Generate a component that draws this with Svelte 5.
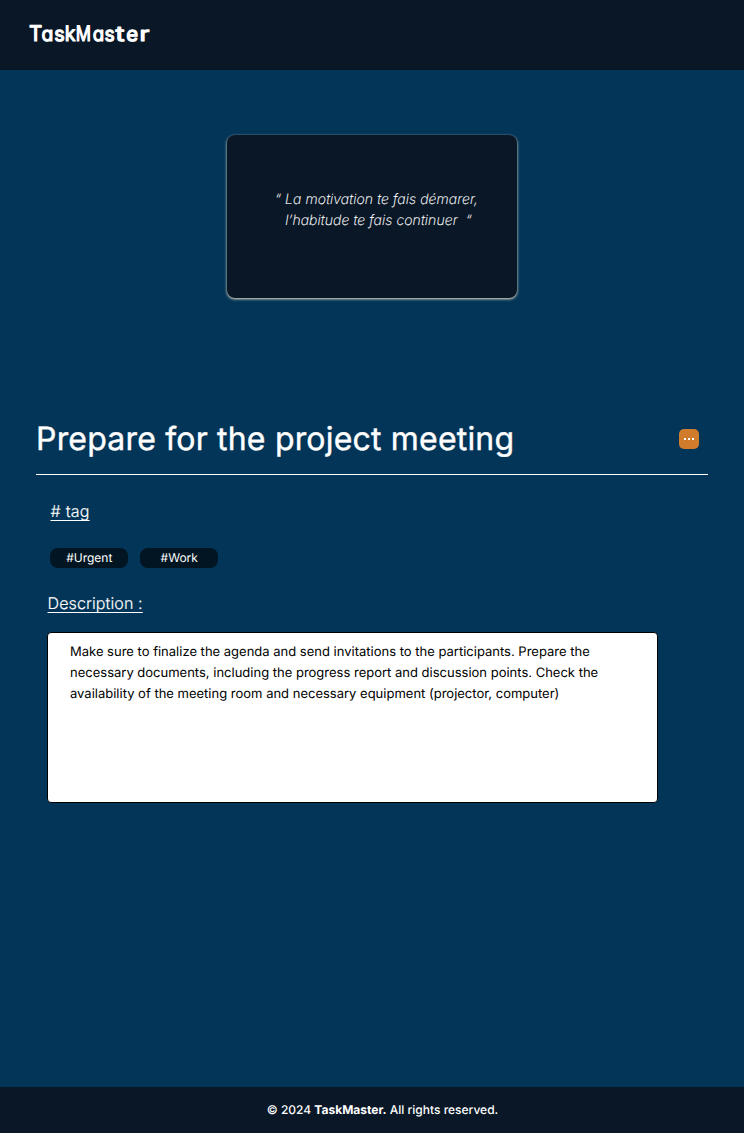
<script>
  const tags = ['#Urgent', '#Work'];

  // letter, left edge, advance width, font size
  const logo = [
    ['T', 0, 13.2, 21.5],
    ['a', 12.6, 11.8, 20],
    ['s', 25.2, 10.4, 20],
    ['k', 35.8, 10.8, 21],
    ['M', 46.7, 15.2, 21],
    ['a', 63.7, 11.4, 20],
    ['s', 75.5, 10.2, 20],
    ['t', 86.6, 9, 20.5],
    ['e', 97.2, 11.8, 20],
    ['r', 110.4, 9.8, 20],
  ];
</script>

<div class="page">
  <header>
    <svg class="logo" width="140" height="34" viewBox="0 0 140 34" aria-label="TaskMaster">
      {#each logo as [letter, x, width, size]}<text {x} y="23.2" font-size={size} textLength={width} lengthAdjust="spacingAndGlyphs">{letter}</text>{/each}
    </svg>
  </header>

  <main>
    <blockquote>
      <p>“ La motivation te fais démarer,</p>
      <p class="second">l’habitude te fais continuer&nbsp; “</p>
    </blockquote>

    <section>
      <div class="heading">
        <h1>Prepare for the project meeting</h1>
        <button aria-label="More">
          <svg width="20" height="20" viewBox="0 0 20 20">
            <path d="M5 9h2v2H5zM9 9h2v2H9zM13 9h2v2h-2z" fill="#fff" />
          </svg>
        </button>
      </div>
      <h2 class="tag-label"># tag</h2>
      <div class="tags">
        {#each tags as tag}
          <span class="tag">{tag}</span>
        {/each}
      </div>
      <h2 class="desc-label">Description :</h2>
      <div class="description">
        Make sure to finalize the agenda and send invitations to the participants. Prepare the<br />
        necessary documents, including the progress report and discussion points. Check the<br />
        availability of the meeting room and necessary equipment (projector, computer)
      </div>
    </section>
  </main>

  <footer>
    <p>© 2024 <b>TaskMaster.</b> All rights reserved.</p>
  </footer>
</div>

<style>
  :global(body) {
    margin: 0;
    background: #033558;
  }
  .page {
    display: flex;
    flex-direction: column;
    height: 1133px;
    box-sizing: border-box;
    background: #033558;
    color: #fff;
    font-family: Inter, sans-serif;
    text-rendering: geometricPrecision;
  }
  h1, h2, p, blockquote {
    margin: 0;
    font-weight: 400;
  }
  header {
    height: 70px;
    box-sizing: border-box;
    padding: 18px 0 0 29px;
    background: #0a1727;
  }
  .logo text {
    font-weight: 400;
    font-feature-settings: 'cv11';
    fill: #fff;
    stroke: #fff;
    stroke-width: 1.2px;
    stroke-linejoin: round;
  }
  main {
    flex: 1;
    padding: 65px 36px 0;
  }
  blockquote {
    width: 290px;
    height: 163px;
    box-sizing: border-box;
    margin: 0 auto;
    padding-top: 54px;
    border-radius: 8px;
    background: #0a1727;
    box-shadow: 0 1px 3px rgba(255, 241, 213, 0.95);
    font-size: 14px;
    line-height: 21px;
    text-align: center;
    padding-left: 9px;
  }
  blockquote p {
    font-style: italic;
    font-weight: 250;
    letter-spacing: 0.12px;
    -webkit-text-stroke: 0.15px #fff;
  }
  .second {
    padding-left: 4px;
  }
  .heading {
    display: flex;
    align-items: center;
    justify-content: space-between;
    height: 70px;
    padding-top: 2px;
    margin-top: 104px;
    padding-right: 9px;
    border-bottom: 1px solid #fff;
  }
  h1 {
    font-size: 32px;
    font-weight: 400;
    line-height: 48px;
    letter-spacing: 0.19px;
    -webkit-text-stroke: 0.4px #fff;
  }
  button {
    width: 20px;
    height: 20px;
    padding: 0;
    border: 0;
    border-radius: 5px;
    background: #d17c2d;
  }
  svg {
    display: block;
  }
  h2 {
    font-size: 16px;
    font-weight: 350;
    line-height: 24px;
    letter-spacing: 0.12px;
    -webkit-text-stroke: 0.15px #fff;
    text-decoration: underline;
    text-decoration-thickness: 1px;
    text-underline-offset: 3px;
  }
  .tag-label {
    margin: 24px 0 0 14.5px;
    letter-spacing: 0.25px;
  }
  .tags {
    display: flex;
    gap: 12px;
    margin: 25px 0 0 14px;
  }
  .tag {
    width: 78px;
    height: 20px;
    border-radius: 8px;
    background: #011522;
    font-size: 12px;
    line-height: 20px;
    text-align: center;
    text-indent: 0.5px;
  }
  .desc-label {
    margin: 23px 0 0 11.5px;
  }
  .description {
    width: 611px;
    height: 171px;
    box-sizing: border-box;
    margin: 17px 0 0 11px;
    padding: 9px 0 0 22px;
    border: 1px solid #000;
    border-radius: 4px;
    background: #fff;
    color: #000;
    font-size: 13px;
    line-height: 21px;
    white-space: nowrap;
  }
  footer {
    height: 46px;
    background: #0a1727;
    font-size: 12px;
    line-height: 46px;
    text-align: center;
    padding-left: 21px;
  }
  footer p {
    font-weight: 500;
  }
  b {
    font-weight: 700;
  }
</style>
